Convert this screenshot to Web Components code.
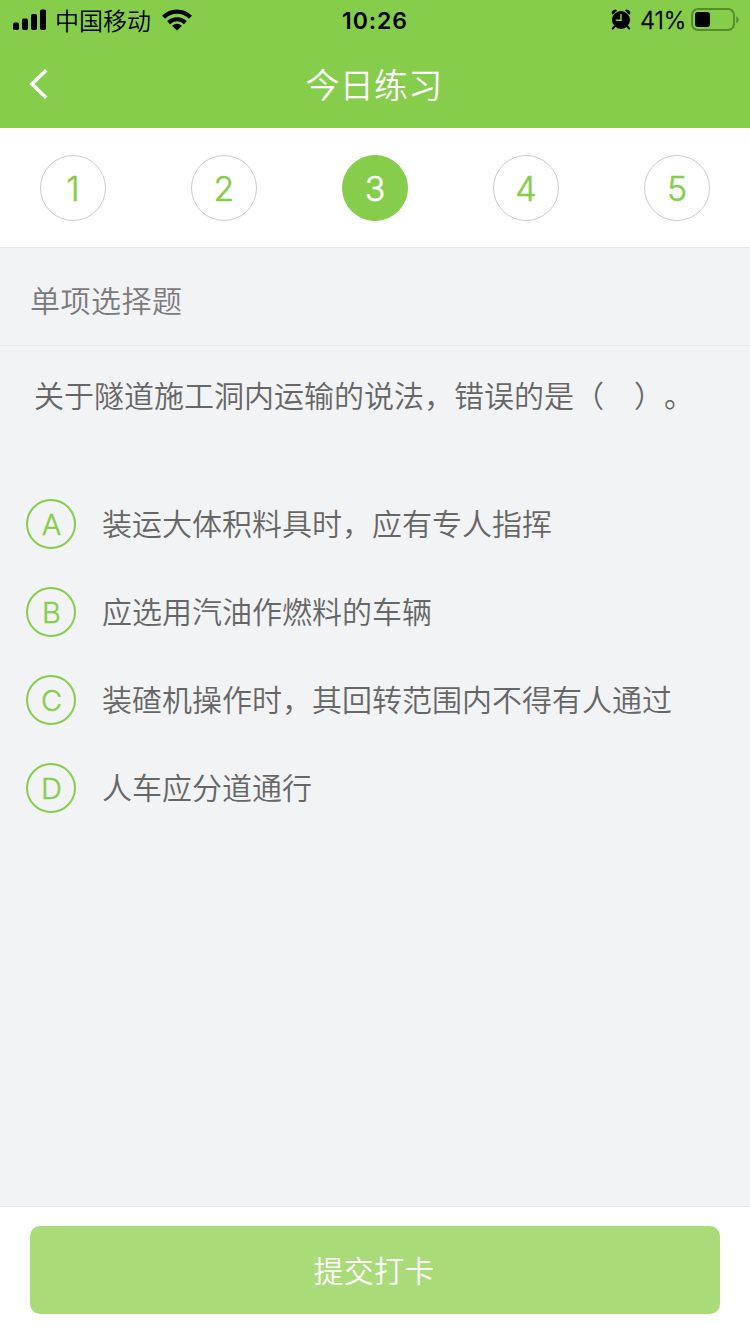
<!DOCTYPE html>
<html lang="zh-CN">
<head>
<meta charset="utf-8">
<meta name="viewport" content="width=device-width">
<title>今日练习</title>
<style>
html,body{margin:0;height:100%}
body{font-family:Inter,"Noto Sans CJK SC",sans-serif;background:#f2f3f5;overflow:hidden}
</style>
</head>
<body>
<practice-page></practice-page>
<script>
const define = (name, html) => customElements.define(name, class extends HTMLElement {
  constructor() {
    super();
    this.attachShadow({ mode: 'open' }).innerHTML = html;
  }
});

define('status-bar', `
<style>
:host{display:grid;grid-template-columns:1fr auto 1fr;height:40px;color:#000;line-height:42px;white-space:nowrap}
.left,.right{display:flex;align-items:center;height:40px}
.left{padding-left:13px}
.carrier{font-size:24px;line-height:40px;margin:0 11px 0 8px;font-family:"Noto Sans CJK SC",sans-serif;font-weight:350}
.time{font-size:23px;font-weight:600;letter-spacing:.9px}
.right{justify-content:flex-end;padding-right:11px}
.pct{font-size:24px;font-weight:300;-webkit-text-stroke:.35px;margin:0 5px 0 9px;letter-spacing:-.2px;line-height:42px;padding-top:2px}
svg{display:block;flex:none}
</style>
<div class="left">
<svg width="34" height="22" viewBox="0 0 34 22"><rect x="0" y="13.5" width="6" height="7.5" rx="1.7"/><rect x="9" y="9.5" width="6" height="11.5" rx="1.7"/><rect x="18" y="5" width="6" height="16" rx="1.7"/><rect x="27" y="0.5" width="6" height="20.5" rx="1.7"/></svg>
<span class="carrier">中国移动</span>
<svg width="30" height="22" viewBox="0 0 30 22"><g fill="none" stroke="#000" stroke-width="4.2"><path d="M1.6 8.3C9 .7 21 .7 28.4 8.3"/><path d="M6.6 13.6c4.8-4.5 12-4.5 16.8 0"/></g><path d="M15 21.5l-5-4.8q5-4 10 0z"/></svg>
</div>
<span class="time">10:26</span>
<div class="right">
<svg width="20" height="22" viewBox="0 0 20 22"><circle cx="10" cy="11" r="9"/><path d="M.8 4.8Q0 1.3 4.8.6L6 1.6 1.8 5.7zM19.2 4.8Q20 1.3 15.2.6L14 1.6 18.2 5.7z"/><path d="M4 17l-2.3 2.6M16 17l2.3 2.6" stroke="#000" stroke-width="2" stroke-linecap="round"/><path d="M10 5V11.3H4.8" fill="none" stroke="#86cd4b" stroke-width="1.5"/></svg>
<span class="pct">41%</span>
<svg width="48" height="24" viewBox="0 0 48 24"><rect x="1" y="1" width="42" height="21" rx="6" fill="none" stroke="#568a2c" stroke-width="1.9"/><rect x="4" y="4" width="15" height="15" rx="3"/><path d="M45.3 8.3q2.4 1.2 2.4 3.5t-2.4 3.5z" fill="#568a2c"/></svg>
</div>`);

define('nav-bar', `
<style>
:host{display:grid;grid-template-columns:60px 1fr 60px;height:88px;align-items:center;color:#fff}
svg{display:block;margin-left:29px}
h1{margin:0;text-align:center;font:350 34px/50px "Noto Sans CJK SC",sans-serif;letter-spacing:.3px;padding-right:2px}
</style>
<svg width="20" height="32" viewBox="0 0 20 32"><path d="M17.2 2.2L3 16l14.2 13.8" fill="none" stroke="#fff" stroke-width="3.6"/></svg>
<h1><slot></slot></h1>`);

define('step-dot', `
<style>
:host{display:flex;box-sizing:border-box;width:66px;height:66px;border:1px solid #ccc;border-radius:50%;align-items:center;justify-content:center;color:#86cd4b;font-size:34px;font-weight:300;-webkit-text-stroke:.5px;line-height:40px;padding-top:1px}
:host([active]){background:#86cd4b;border-color:#86cd4b;color:#fff}
</style><slot></slot>`);

define('step-row', `
<style>:host{display:flex;box-sizing:border-box;justify-content:space-between;height:120px;padding:27px 40px 0;background:#fff;border-bottom:1px solid #e8e8e8}</style><slot></slot>`);

define('section-label', `
<style>:host{display:block;box-sizing:border-box;height:98px;padding-left:30px;border-bottom:1px solid #e9eaec;color:#7b7b7d;font:350 30px/103px "Noto Sans CJK SC",sans-serif;letter-spacing:.5px}</style><slot></slot>`);

define('question-text', `
<style>:host{display:block;padding:26px 34px 0;height:108px;color:#666;font:350 30px/44px "Noto Sans CJK SC",sans-serif;white-space:nowrap;text-spacing-trim:space-all}</style><slot></slot>`);

define('answer-option', `
<style>
:host{display:flex;align-items:center;height:88px;padding-left:26px;color:#666;font:350 30px/44px "Noto Sans CJK SC",sans-serif}
.mark{display:flex;box-sizing:border-box;width:50px;height:50px;margin-right:26px;border:2px solid #86cd4b;border-radius:50%;align-items:center;justify-content:center;color:#86cd4b;font:300 29px/36px Inter,sans-serif;-webkit-text-stroke:.4px;padding:2px 0 0 1px}
.text{padding-bottom:4px}
</style><span class="mark"><slot name="mark"></slot></span><span class="text"><slot></slot></span>`);

define('submit-bar', `
<style>
:host{display:block;box-sizing:border-box;height:128px;padding:19px 30px 0;background:#fff;border-top:1px solid #e5e6e8}
button{display:block;width:100%;height:88px;border:0;border-radius:10px;background:#a9dc79;color:#fff;font:350 30px/86px "Noto Sans CJK SC",sans-serif;letter-spacing:.3px;padding:0 2px 2px 0}
</style><button><slot></slot></button>`);

define('practice-page', `
<style>
:host{display:flex;flex-direction:column;height:1334px;width:750px;background:#f2f3f5}
header{background:#86cd4b}
main{flex:1}
</style>
<header><status-bar></status-bar><nav-bar>今日练习</nav-bar></header>
<step-row><step-dot>1</step-dot><step-dot>2</step-dot><step-dot active>3</step-dot><step-dot>4</step-dot><step-dot>5</step-dot></step-row>
<main>
<section-label>单项选择题</section-label>
<question-text>关于隧道施工洞内运输的说法，错误的是（　）。</question-text>
<answer-option><span slot="mark">A</span>装运大体积料具时，应有专人指挥</answer-option>
<answer-option><span slot="mark">B</span>应选用汽油作燃料的车辆</answer-option>
<answer-option><span slot="mark">C</span>装碴机操作时，其回转范围内不得有人通过</answer-option>
<answer-option><span slot="mark">D</span>人车应分道通行</answer-option>
</main>
<submit-bar>提交打卡</submit-bar>`);
</script>
</body>
</html>
